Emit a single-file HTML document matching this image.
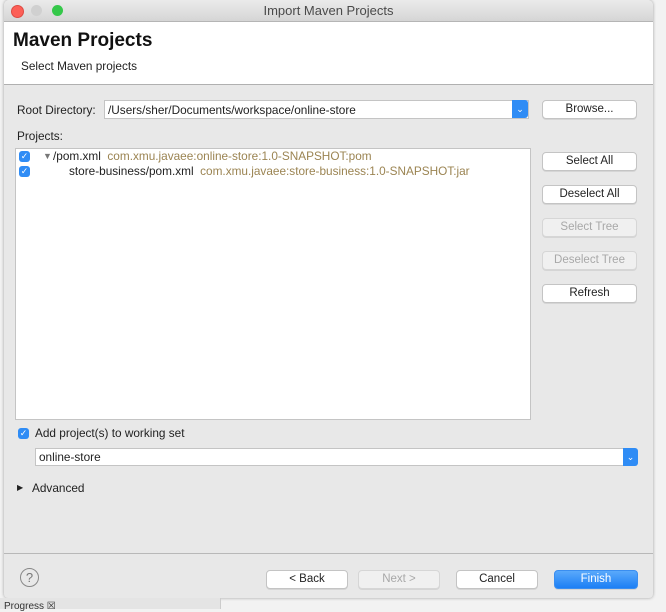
<!DOCTYPE html><html><head><style>
body{margin:0;width:666px;height:609px;background:#f2f2f2;font-family:"Liberation Sans",sans-serif;font-size:11.8px;color:#222;position:relative;overflow:hidden}
.a{position:absolute}
.win{left:4px;top:0;width:649px;height:598px;background:#e8e8e8;border-radius:5px 5px 4px 4px;box-shadow:0 0 3px rgba(0,0,0,.35);overflow:hidden}
.tb{left:0;top:0;width:649px;height:21px;background:linear-gradient(#ebebeb,#d5d5d5);border-bottom:1px solid #b5b5b5;text-align:center;line-height:22px;font-size:13px;color:#4a4a4a}
.dot{top:5px;width:11px;height:11px;border-radius:50%}
.btn{background:#fff;border:1px solid #c4c4c4;border-radius:4px;text-align:center;line-height:17px;height:17px;font-size:11.5px;box-shadow:0 1px 0 rgba(0,0,0,.08)}
.dis{background:#f0f0f0;color:#a8a8a8;border-color:#d6d6d6}
.cb{width:11px;height:11px;background:#2f8cf5;border-radius:3px;color:#fff;font-size:9px;line-height:11px;text-align:center}
.g{color:#9b8452}
</style></head><body>
<div class="a win">
<div class="a tb">Import Maven Projects</div>
<div class="a dot" style="left:7px;background:#fc5f57;border:0.5px solid #de4a42"></div>
<div class="a dot" style="left:27px;background:#d0d0d0"></div>
<div class="a dot" style="left:48px;background:#35c84a"></div>
<div class="a" style="left:0;top:22px;width:649px;height:62px;background:#fff;border-bottom:1px solid #b0b0b0"></div>
<div class="a" style="left:9px;top:30px;font-size:19px;font-weight:bold;color:#111">Maven Projects</div>
<div class="a" style="left:17px;top:59px">Select Maven projects</div>
<div class="a" style="left:13px;top:103px">Root Directory:</div>
<div class="a" style="left:100px;top:100px;width:423px;height:17px;background:#fff;border:1px solid #c4c4c4"></div>
<div class="a" style="left:104px;top:103px">/Users/sher/Documents/workspace/online-store</div>
<div class="a" style="left:508px;top:100px;width:16px;height:18px;background:#2f8cf5;border-radius:0 3px 3px 0;color:#fff;font-size:9px;text-align:center;line-height:18px">⌄</div>
<div class="a btn" style="left:538px;top:100px;width:93px">Browse...</div>
<div class="a" style="left:13px;top:129px">Projects:</div>
<div class="a" style="left:11px;top:148px;width:514px;height:270px;background:#fff;border:1px solid #c4c4c4"></div>
<div class="a cb" style="left:15px;top:151px">✓</div>
<div class="a cb" style="left:15px;top:166px">✓</div>
<div class="a" style="left:39px;top:151px;font-size:9px;color:#777">▼</div>
<div class="a" style="left:49px;top:149px">/pom.xml &nbsp;<span class="g">com.xmu.javaee:online-store:1.0-SNAPSHOT:pom</span></div>
<div class="a" style="left:65px;top:164px">store-business/pom.xml &nbsp;<span class="g">com.xmu.javaee:store-business:1.0-SNAPSHOT:jar</span></div>
<div class="a btn" style="left:538px;top:152px;width:93px">Select All</div>
<div class="a btn" style="left:538px;top:185px;width:93px">Deselect All</div>
<div class="a btn dis" style="left:538px;top:218px;width:93px">Select Tree</div>
<div class="a btn dis" style="left:538px;top:251px;width:93px">Deselect Tree</div>
<div class="a btn" style="left:538px;top:284px;width:93px">Refresh</div>
<div class="a cb" style="left:14px;top:428px">✓</div>
<div class="a" style="left:31px;top:426px">Add project(s) to working set</div>
<div class="a" style="left:31px;top:448px;width:590px;height:16px;background:#fff;border:1px solid #c4c4c4"></div>
<div class="a" style="left:35px;top:450px">online-store</div>
<div class="a" style="left:619px;top:448px;width:15px;height:18px;background:#2f8cf5;border-radius:0 3px 3px 0;color:#fff;font-size:9px;text-align:center;line-height:18px">⌄</div>
<div class="a" style="left:13px;top:483px;font-size:8px">▶</div>
<div class="a" style="left:28px;top:481px">Advanced</div>
<div class="a" style="left:0;top:553px;width:649px;border-top:1px solid #b8b8b8"></div>
<div class="a" style="left:16px;top:568px;width:17px;height:17px;border:1.5px solid #888;border-radius:50%;text-align:center;line-height:17px;font-size:13px;color:#777">?</div>
<div class="a btn" style="left:262px;top:570px;width:80px">&lt; Back</div>
<div class="a btn dis" style="left:354px;top:570px;width:80px">Next &gt;</div>
<div class="a btn" style="left:452px;top:570px;width:80px">Cancel</div>
<div class="a btn" style="left:550px;top:570px;width:82px;background:linear-gradient(#5aa9fb,#1c7ff5);color:#fff;border-color:#3a8ef0">Finish</div>
</div>
<div class="a" style="left:0;top:598px;width:220px;height:11px;background:#e4e4e4;border-right:1px solid #ccc"></div>
<div class="a" style="left:4px;top:601px;font-size:10px;color:#333">Progress ☒</div>
</body></html>
